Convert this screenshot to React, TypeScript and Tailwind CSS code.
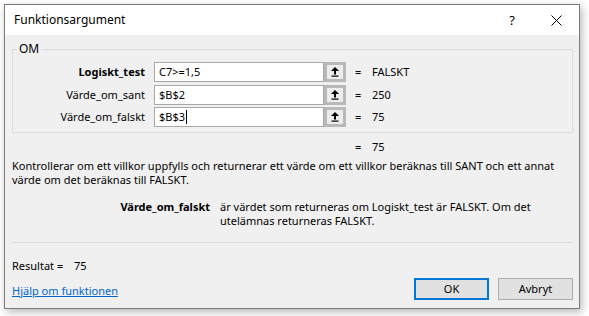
import React from "react";

const font = "font-['Noto_Sans',sans-serif]";

const args = [
  { label: "Logiskt_test", value: "C7>=1,5", result: "FALSKT", bold: true, caret: false },
  { label: "Värde_om_sant", value: "$B$2", result: "250", bold: false, caret: false },
  { label: "Värde_om_falskt", value: "$B$3", result: "75", bold: false, caret: true },
];

function UpArrow() {
  return (
    <svg width="10" height="12" viewBox="0 0 10 12">
      <polygon points="5,1 9,5 6,5 6,8.5 4,8.5 4,5 1,5" fill="#000" />
      <rect x="1.5" y="9.5" width="7" height="1.2" fill="#000" />
    </svg>
  );
}

function ArgRow({ a }: { a: (typeof args)[number] }) {
  return (
    <div className="flex h-[20px] shrink-0 items-center">
      <div className={`w-[132px] text-right ${a.bold ? "font-bold" : ""}`}>{a.label}</div>
      <div className="ml-[9px] flex h-[20px] w-[170px] items-center border border-[#a8a8a8] bg-white pl-[4px]">
        {a.value}
        {a.caret && <span className="ml-[1px] inline-block h-[14px] w-[1px] bg-black" />}
      </div>
      <div className="flex h-[20px] w-[22px] items-center justify-center border-[3px] border-[#b9b9b9] bg-[#ececec]">
        <UpArrow />
      </div>
      <div className="ml-[9px] w-[17px]">=</div>
      <div>{a.result}</div>
    </div>
  );
}

export default function App() {
  return (
    <div className={`h-[316px] w-[589px] overflow-hidden bg-white text-[11px] leading-[14px] text-black ${font}`}>
      <div className="ml-[4px] mt-[4px] flex h-[305px] w-[576px] flex-col border border-[#7a7a7a] bg-[#f0f0f0] shadow-[2px_3px_8px_rgba(0,0,0,0.28)]">
        {/* title bar */}
        <div className="flex h-[30px] shrink-0 items-center bg-white pl-[9px] text-[12px]">
          <span className="flex-1">Funktionsargument</span>
          <span className="w-[12px] text-center text-[13px]">?</span>
          <div className="ml-[32px] mr-[17px] flex w-[12px] justify-center">
            <svg width="11" height="11" viewBox="0 0 11 11">
              <path d="M0.5 0.5 L10.5 10.5 M10.5 0.5 L0.5 10.5" stroke="#000" strokeWidth="1" />
            </svg>
          </div>
        </div>

        {/* body */}
        <div className="flex flex-1 flex-col pl-[7px] pr-[6px]">
          <div className="relative mt-[14px] h-[84px] w-[561px] shrink-0 border border-[#dcdcdc] pt-[12px]">
            <span className="absolute left-[4px] top-[-8px] bg-[#f0f0f0] px-[2px] text-[12px]">OM</span>
            <div className="flex flex-col gap-[2.5px]">
              {args.map((a) => (
                <ArgRow key={a.label} a={a} />
              ))}
            </div>
          </div>

          <div className="mt-[6px] flex h-[16px] shrink-0 items-center pl-[343px]">
            <span className="w-[17px]">=</span>
            <span>75</span>
          </div>

          <p className="mt-[4px]">
            Kontrollerar om ett villkor uppfylls och returnerar ett värde om ett villkor beräknas till SANT och ett annat
            <br />
            värde om det beräknas till FALSKT.
          </p>

          <div className="mt-[13px] flex">
            <div className="w-[198px] text-right font-bold">Värde_om_falskt</div>
            <p className="ml-[10px]">
              är värdet som returneras om Logiskt_test är FALSKT. Om det
              <br />
              utelämnas returneras FALSKT.
            </p>
          </div>

          <div className="mt-[14px] h-px w-[561px] shrink-0 bg-[#dcdcdc]" />

          <div className="mt-[16px] flex">
            <span className="w-[62px]">Resultat =</span>
            <span>75</span>
          </div>

          <div className="mt-[5px] flex items-center">
            <a className="mt-[3px] flex-1 text-[#0066cc] underline">Hjälp om funktionen</a>
            <button className="flex h-[22px] w-[75px] items-center justify-center border-2 border-[#0078d7] bg-[#e1e1e1]">
              OK
            </button>
            <button className="ml-[9px] flex h-[22px] w-[75px] items-center justify-center border border-[#adadad] bg-[#e1e1e1]">
              Avbryt
            </button>
          </div>
        </div>
      </div>
    </div>
  );
}
